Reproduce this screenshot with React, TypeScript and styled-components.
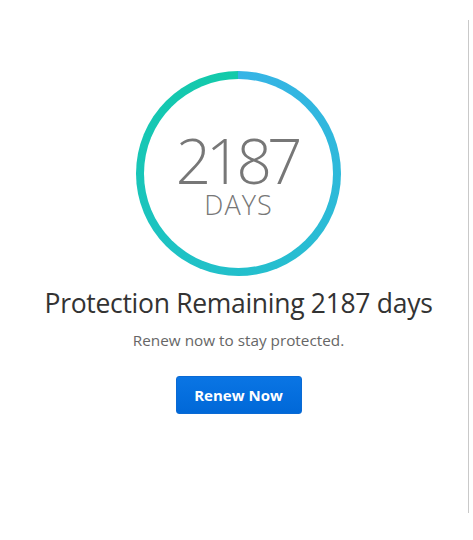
import React, { FC, ReactElement } from 'react';
import styled, { createGlobalStyle } from 'styled-components';

const GlobalStyle = createGlobalStyle`
  html, body {
    margin: 0;
    padding: 0;
    background: #fff;
  }
  body {
    font-family: "Open Sans", "Liberation Sans", sans-serif;
  }
`;

const days = 2187;

const App: FC = (): ReactElement => (
  <>
    <GlobalStyle />
    <Page>
      <Main>
        <Ring>
          <RingInner>
            <Count>{days}</Count>
            <Unit>DAYS</Unit>
          </RingInner>
        </Ring>
        <Title>Protection Remaining {days} days</Title>
        <Subtitle>Renew now to stay protected.</Subtitle>
        <RenewButton type="button">Renew Now</RenewButton>
      </Main>
      <Divider />
    </Page>
  </>
);

export default App;

const Page = styled.div`
  display: flex;
  width: 473px;
  height: 540px;
`;

const Main = styled.div`
  width: 459px;
  padding-left: 9px;
  padding-top: 71px;
  display: flex;
  flex-direction: column;
  align-items: center;
`;

const Divider = styled.div`
  width: 1px;
  margin-top: 20px;
  height: 493px;
  background: #c9c9c9;
`;

const Ring = styled.div`
  width: 205px;
  height: 205px;
  border-radius: 50%;
  background: conic-gradient(#36b4e6 0deg, #2bbbd6 120deg, #20c1c8 200deg, #17c6b6 280deg, #12caa9 360deg);
  display: flex;
  align-items: center;
  justify-content: center;
`;

const RingInner = styled.div`
  width: 189px;
  height: 189px;
  border-radius: 50%;
  background: #fff;
  display: flex;
  flex-direction: column;
  align-items: center;
  justify-content: center;
  color: #777;
  font-weight: 300;
`;

const Count = styled.div`
  font-size: 62px;
  line-height: 62px;
  letter-spacing: -5px;
  margin-top: 0;
  margin-left: -4px;
`;

const Unit = styled.div`
  font-size: 27px;
  line-height: 28px;
  letter-spacing: 1px;
`;

const Title = styled.h1`
  margin: 7px 0 0;
  font-size: 26.5px;
  line-height: 40px;
  font-weight: 400;
  color: #333;
  letter-spacing: -0.3px;
`;

const Subtitle = styled.p`
  margin: 7px 0 0;
  font-size: 15.3px;
  line-height: 20px;
  color: #666;
`;

const RenewButton = styled.button`
  margin-top: 26px;
  width: 126px;
  height: 38px;
  border: 1px solid #0a6ad4;
  border-radius: 3px;
  background: linear-gradient(#0a75e4, #0068d8);
  color: #fff;
  font-family: "Open Sans", "Liberation Sans", sans-serif;
  font-size: 15px;
  font-weight: 700;
  cursor: pointer;
`;
